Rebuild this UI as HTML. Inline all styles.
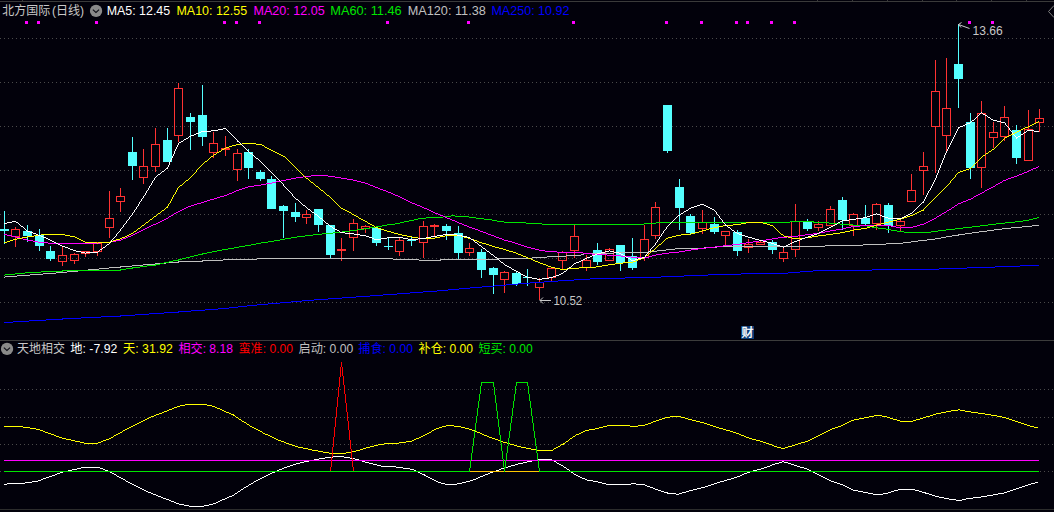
<!DOCTYPE html><html><head><meta charset="utf-8"><title>chart</title><style>html,body{margin:0;padding:0;background:#02010b;overflow:hidden}svg{display:block}text{font-family:"Liberation Sans","Noto Sans CJK SC",sans-serif;font-size:12.4px}</style></head><body>
<svg width="1054" height="512" viewBox="0 0 1054 512">
<rect width="1054" height="512" fill="#02010b"/>
<g shape-rendering="crispEdges">
<rect x="0" y="1" width="1054" height="1" fill="#3a3a3a"/>
<rect x="22" y="0" width="1" height="1" fill="#3a3a3a"/>
<rect x="817" y="0" width="1" height="1" fill="#3a3a3a"/>
<rect x="852" y="0" width="1" height="1" fill="#3a3a3a"/>
<rect x="887" y="0" width="1" height="1" fill="#3a3a3a"/>
<rect x="922" y="0" width="1" height="1" fill="#3a3a3a"/>
<rect x="956" y="0" width="1" height="1" fill="#3a3a3a"/>
<rect x="991" y="0" width="1" height="1" fill="#3a3a3a"/>
<rect x="1026" y="0" width="1" height="1" fill="#3a3a3a"/>
<rect x="0" y="340" width="1054" height="1" fill="#3c3c3c"/>
<rect x="0" y="509" width="1054" height="1" fill="#2c2c2c"/>
<line x1="0" x2="1054" y1="38.5" y2="38.5" stroke="#4a4a4a" stroke-width="1" stroke-dasharray="1 3"/>
<line x1="0" x2="1054" y1="82.5" y2="82.5" stroke="#4a4a4a" stroke-width="1" stroke-dasharray="1 3"/>
<line x1="0" x2="1054" y1="126.5" y2="126.5" stroke="#4a4a4a" stroke-width="1" stroke-dasharray="1 3"/>
<line x1="0" x2="1054" y1="170.5" y2="170.5" stroke="#4a4a4a" stroke-width="1" stroke-dasharray="1 3"/>
<line x1="0" x2="1054" y1="214.5" y2="214.5" stroke="#4a4a4a" stroke-width="1" stroke-dasharray="1 3"/>
<line x1="0" x2="1054" y1="258.5" y2="258.5" stroke="#4a4a4a" stroke-width="1" stroke-dasharray="1 3"/>
<line x1="0" x2="1054" y1="302.5" y2="302.5" stroke="#4a4a4a" stroke-width="1" stroke-dasharray="1 3"/>
<line x1="0" x2="1054" y1="389.5" y2="389.5" stroke="#4a4a4a" stroke-width="1" stroke-dasharray="1 3"/>
<line x1="0" x2="1054" y1="417.5" y2="417.5" stroke="#4a4a4a" stroke-width="1" stroke-dasharray="1 3"/>
<line x1="0" x2="1054" y1="444.5" y2="444.5" stroke="#4a4a4a" stroke-width="1" stroke-dasharray="1 3"/>
<line x1="0" x2="1054" y1="471.5" y2="471.5" stroke="#4a4a4a" stroke-width="1" stroke-dasharray="1 3"/>
<rect x="25" y="21" width="3" height="3" fill="#ff00ff"/>
<rect x="37" y="21" width="3" height="3" fill="#ff00ff"/>
<rect x="95" y="21" width="3" height="3" fill="#ff00ff"/>
<rect x="223" y="21" width="3" height="3" fill="#ff00ff"/>
<rect x="235" y="21" width="3" height="3" fill="#ff00ff"/>
<rect x="258" y="21" width="3" height="3" fill="#ff00ff"/>
<rect x="386" y="21" width="3" height="3" fill="#ff00ff"/>
<rect x="467" y="21" width="3" height="3" fill="#ff00ff"/>
<rect x="572" y="21" width="3" height="3" fill="#ff00ff"/>
<rect x="665" y="21" width="3" height="3" fill="#ff00ff"/>
<rect x="700" y="21" width="3" height="3" fill="#ff00ff"/>
<rect x="735" y="21" width="3" height="3" fill="#ff00ff"/>
<rect x="746" y="21" width="3" height="3" fill="#ff00ff"/>
<rect x="770" y="21" width="3" height="3" fill="#ff00ff"/>
<rect x="793" y="21" width="3" height="3" fill="#ff00ff"/>
<rect x="968" y="21" width="3" height="3" fill="#ff00ff"/>
<rect x="991" y="21" width="3" height="3" fill="#ff00ff"/>
<rect x="4" y="211" width="1" height="33" fill="#54ffff"/>
<rect x="0" y="229" width="9" height="2" fill="#54ffff"/>
<rect x="15" y="227" width="1" height="2" fill="#ff3232"/>
<rect x="15" y="237" width="1" height="10" fill="#ff3232"/>
<rect x="11.5" y="229.5" width="8" height="7" fill="none" stroke="#ff3232" stroke-width="1"/>
<rect x="27" y="225" width="1" height="17" fill="#54ffff"/>
<rect x="23" y="231" width="9" height="5" fill="#54ffff"/>
<rect x="39" y="229" width="1" height="22" fill="#54ffff"/>
<rect x="35" y="235" width="9" height="11" fill="#54ffff"/>
<rect x="50" y="246" width="1" height="15" fill="#54ffff"/>
<rect x="46" y="251" width="9" height="8" fill="#54ffff"/>
<rect x="62" y="246" width="1" height="9" fill="#ff3232"/>
<rect x="62" y="262" width="1" height="4" fill="#ff3232"/>
<rect x="58.5" y="255.5" width="8" height="6" fill="none" stroke="#ff3232" stroke-width="1"/>
<rect x="74" y="253" width="1" height="1" fill="#ff3232"/>
<rect x="74" y="261" width="1" height="3" fill="#ff3232"/>
<rect x="70.5" y="254.5" width="8" height="6" fill="none" stroke="#ff3232" stroke-width="1"/>
<rect x="85" y="254" width="1" height="3" fill="#ff3232"/>
<rect x="81.5" y="251.5" width="8" height="2" fill="none" stroke="#ff3232" stroke-width="1"/>
<rect x="97" y="242" width="1" height="1" fill="#ff3232"/>
<rect x="97" y="252" width="1" height="4" fill="#ff3232"/>
<rect x="93.5" y="243.5" width="8" height="8" fill="none" stroke="#ff3232" stroke-width="1"/>
<rect x="109" y="191" width="1" height="27" fill="#ff3232"/>
<rect x="109" y="228" width="1" height="10" fill="#ff3232"/>
<rect x="105.5" y="218.5" width="8" height="9" fill="none" stroke="#ff3232" stroke-width="1"/>
<rect x="120" y="188" width="1" height="8" fill="#ff3232"/>
<rect x="120" y="202" width="1" height="10" fill="#ff3232"/>
<rect x="116.5" y="196.5" width="8" height="5" fill="none" stroke="#ff3232" stroke-width="1"/>
<rect x="132" y="137" width="1" height="43" fill="#54ffff"/>
<rect x="128" y="152" width="9" height="14" fill="#54ffff"/>
<rect x="143" y="149" width="1" height="17" fill="#ff3232"/>
<rect x="143" y="178" width="1" height="6" fill="#ff3232"/>
<rect x="139.5" y="166.5" width="8" height="11" fill="none" stroke="#ff3232" stroke-width="1"/>
<rect x="155" y="128" width="1" height="16" fill="#ff3232"/>
<rect x="155" y="167" width="1" height="5" fill="#ff3232"/>
<rect x="151.5" y="144.5" width="8" height="22" fill="none" stroke="#ff3232" stroke-width="1"/>
<rect x="167" y="128" width="1" height="34" fill="#54ffff"/>
<rect x="163" y="140" width="9" height="22" fill="#54ffff"/>
<rect x="178" y="83" width="1" height="5" fill="#ff3232"/>
<rect x="178" y="136" width="1" height="6" fill="#ff3232"/>
<rect x="174.5" y="88.5" width="8" height="47" fill="none" stroke="#ff3232" stroke-width="1"/>
<rect x="190" y="113" width="1" height="37" fill="#54ffff"/>
<rect x="186" y="117" width="9" height="5" fill="#54ffff"/>
<rect x="202" y="85" width="1" height="61" fill="#54ffff"/>
<rect x="198" y="115" width="9" height="22" fill="#54ffff"/>
<rect x="213" y="132" width="1" height="11" fill="#ff3232"/>
<rect x="213" y="153" width="1" height="5" fill="#ff3232"/>
<rect x="209.5" y="143.5" width="8" height="9" fill="none" stroke="#ff3232" stroke-width="1"/>
<rect x="225" y="136" width="1" height="12" fill="#ff3232"/>
<rect x="225" y="150" width="1" height="6" fill="#ff3232"/>
<rect x="221" y="148" width="9" height="2" fill="#ff3232"/>
<rect x="237" y="149" width="1" height="4" fill="#ff3232"/>
<rect x="237" y="170" width="1" height="11" fill="#ff3232"/>
<rect x="233.5" y="153.5" width="8" height="16" fill="none" stroke="#ff3232" stroke-width="1"/>
<rect x="248" y="149" width="1" height="30" fill="#54ffff"/>
<rect x="244" y="152" width="9" height="16" fill="#54ffff"/>
<rect x="260" y="170" width="1" height="11" fill="#54ffff"/>
<rect x="256" y="172" width="9" height="7" fill="#54ffff"/>
<rect x="271" y="176" width="1" height="33" fill="#54ffff"/>
<rect x="267" y="179" width="9" height="30" fill="#54ffff"/>
<rect x="283" y="205" width="1" height="33" fill="#54ffff"/>
<rect x="279" y="206" width="9" height="5" fill="#54ffff"/>
<rect x="295" y="203" width="1" height="19" fill="#54ffff"/>
<rect x="291" y="212" width="9" height="5" fill="#54ffff"/>
<rect x="306" y="210" width="1" height="4" fill="#ff3232"/>
<rect x="306" y="218" width="1" height="6" fill="#ff3232"/>
<rect x="302.5" y="214.5" width="8" height="3" fill="none" stroke="#ff3232" stroke-width="1"/>
<rect x="318" y="209" width="1" height="23" fill="#54ffff"/>
<rect x="314" y="209" width="9" height="16" fill="#54ffff"/>
<rect x="330" y="225" width="1" height="33" fill="#54ffff"/>
<rect x="326" y="225" width="9" height="30" fill="#54ffff"/>
<rect x="341" y="238" width="1" height="11" fill="#ff3232"/>
<rect x="341" y="251" width="1" height="10" fill="#ff3232"/>
<rect x="337" y="249" width="9" height="2" fill="#ff3232"/>
<rect x="353" y="219" width="1" height="4" fill="#ff3232"/>
<rect x="353" y="238" width="1" height="13" fill="#ff3232"/>
<rect x="349.5" y="223.5" width="8" height="14" fill="none" stroke="#ff3232" stroke-width="1"/>
<rect x="365" y="225" width="1" height="1" fill="#ff3232"/>
<rect x="365" y="229" width="1" height="4" fill="#ff3232"/>
<rect x="361.5" y="226.5" width="8" height="2" fill="none" stroke="#ff3232" stroke-width="1"/>
<rect x="376" y="226" width="1" height="20" fill="#54ffff"/>
<rect x="372" y="228" width="9" height="15" fill="#54ffff"/>
<rect x="388" y="238" width="1" height="12" fill="#54ffff"/>
<rect x="384" y="246" width="9" height="1" fill="#54ffff"/>
<rect x="399" y="238" width="1" height="2" fill="#ff3232"/>
<rect x="399" y="252" width="1" height="4" fill="#ff3232"/>
<rect x="395.5" y="240.5" width="8" height="11" fill="none" stroke="#ff3232" stroke-width="1"/>
<rect x="411" y="236" width="1" height="10" fill="#54ffff"/>
<rect x="407" y="240" width="9" height="1" fill="#54ffff"/>
<rect x="423" y="221" width="1" height="5" fill="#ff3232"/>
<rect x="423" y="243" width="1" height="15" fill="#ff3232"/>
<rect x="419.5" y="226.5" width="8" height="16" fill="none" stroke="#ff3232" stroke-width="1"/>
<rect x="434" y="224" width="1" height="1" fill="#ff3232"/>
<rect x="434" y="227" width="1" height="9" fill="#ff3232"/>
<rect x="430" y="225" width="9" height="2" fill="#ff3232"/>
<rect x="446" y="224" width="1" height="16" fill="#54ffff"/>
<rect x="442" y="226" width="9" height="5" fill="#54ffff"/>
<rect x="458" y="226" width="1" height="33" fill="#54ffff"/>
<rect x="454" y="233" width="9" height="20" fill="#54ffff"/>
<rect x="469" y="243" width="1" height="5" fill="#ff3232"/>
<rect x="469" y="253" width="1" height="3" fill="#ff3232"/>
<rect x="465.5" y="248.5" width="8" height="4" fill="none" stroke="#ff3232" stroke-width="1"/>
<rect x="481" y="249" width="1" height="29" fill="#54ffff"/>
<rect x="477" y="252" width="9" height="18" fill="#54ffff"/>
<rect x="493" y="267" width="1" height="27" fill="#54ffff"/>
<rect x="489" y="268" width="9" height="7" fill="#54ffff"/>
<rect x="504" y="271" width="1" height="1" fill="#ff3232"/>
<rect x="504" y="280" width="1" height="13" fill="#ff3232"/>
<rect x="500.5" y="272.5" width="8" height="7" fill="none" stroke="#ff3232" stroke-width="1"/>
<rect x="516" y="271" width="1" height="15" fill="#54ffff"/>
<rect x="512" y="273" width="9" height="11" fill="#54ffff"/>
<rect x="527" y="269" width="1" height="17" fill="#54ffff"/>
<rect x="523" y="277" width="9" height="1" fill="#54ffff"/>
<rect x="539" y="278" width="1" height="4" fill="#ff3232"/>
<rect x="539" y="288" width="1" height="12" fill="#ff3232"/>
<rect x="535.5" y="282.5" width="8" height="5" fill="none" stroke="#ff3232" stroke-width="1"/>
<rect x="551" y="278" width="1" height="4" fill="#ff3232"/>
<rect x="547.5" y="268.5" width="8" height="9" fill="none" stroke="#ff3232" stroke-width="1"/>
<rect x="562" y="251" width="1" height="1" fill="#ff3232"/>
<rect x="562" y="261" width="1" height="9" fill="#ff3232"/>
<rect x="558.5" y="252.5" width="8" height="8" fill="none" stroke="#ff3232" stroke-width="1"/>
<rect x="574" y="225" width="1" height="11" fill="#ff3232"/>
<rect x="574" y="251" width="1" height="7" fill="#ff3232"/>
<rect x="570.5" y="236.5" width="8" height="14" fill="none" stroke="#ff3232" stroke-width="1"/>
<rect x="586" y="255" width="1" height="5" fill="#ff3232"/>
<rect x="586" y="268" width="1" height="3" fill="#ff3232"/>
<rect x="582.5" y="260.5" width="8" height="7" fill="none" stroke="#ff3232" stroke-width="1"/>
<rect x="597" y="243" width="1" height="22" fill="#54ffff"/>
<rect x="593" y="250" width="9" height="12" fill="#54ffff"/>
<rect x="609" y="248" width="1" height="1" fill="#ff3232"/>
<rect x="605.5" y="249.5" width="8" height="11" fill="none" stroke="#ff3232" stroke-width="1"/>
<rect x="620" y="245" width="1" height="26" fill="#54ffff"/>
<rect x="616" y="245" width="9" height="18" fill="#54ffff"/>
<rect x="632" y="238" width="1" height="32" fill="#54ffff"/>
<rect x="628" y="256" width="9" height="12" fill="#54ffff"/>
<rect x="644" y="225" width="1" height="14" fill="#ff3232"/>
<rect x="644" y="258" width="1" height="3" fill="#ff3232"/>
<rect x="640.5" y="239.5" width="8" height="18" fill="none" stroke="#ff3232" stroke-width="1"/>
<rect x="655" y="202" width="1" height="5" fill="#ff3232"/>
<rect x="655" y="236" width="1" height="3" fill="#ff3232"/>
<rect x="651.5" y="207.5" width="8" height="28" fill="none" stroke="#ff3232" stroke-width="1"/>
<rect x="667" y="105" width="1" height="48" fill="#54ffff"/>
<rect x="663" y="105" width="9" height="46" fill="#54ffff"/>
<rect x="679" y="179" width="1" height="51" fill="#54ffff"/>
<rect x="675" y="187" width="9" height="21" fill="#54ffff"/>
<rect x="690" y="214" width="1" height="20" fill="#54ffff"/>
<rect x="686" y="216" width="9" height="17" fill="#54ffff"/>
<rect x="702" y="210" width="1" height="12" fill="#ff3232"/>
<rect x="702" y="229" width="1" height="5" fill="#ff3232"/>
<rect x="698.5" y="222.5" width="8" height="6" fill="none" stroke="#ff3232" stroke-width="1"/>
<rect x="714" y="217" width="1" height="17" fill="#54ffff"/>
<rect x="710" y="224" width="9" height="8" fill="#54ffff"/>
<rect x="725" y="236" width="1" height="10" fill="#ff3232"/>
<rect x="721.5" y="231.5" width="8" height="4" fill="none" stroke="#ff3232" stroke-width="1"/>
<rect x="737" y="230" width="1" height="26" fill="#54ffff"/>
<rect x="733" y="232" width="9" height="19" fill="#54ffff"/>
<rect x="748" y="239" width="1" height="5" fill="#ff3232"/>
<rect x="748" y="248" width="1" height="5" fill="#ff3232"/>
<rect x="744.5" y="244.5" width="8" height="3" fill="none" stroke="#ff3232" stroke-width="1"/>
<rect x="760" y="240" width="1" height="2" fill="#ff3232"/>
<rect x="756.5" y="242.5" width="8" height="2" fill="none" stroke="#ff3232" stroke-width="1"/>
<rect x="772" y="240" width="1" height="14" fill="#54ffff"/>
<rect x="768" y="242" width="9" height="8" fill="#54ffff"/>
<rect x="783" y="248" width="1" height="4" fill="#ff3232"/>
<rect x="783" y="259" width="1" height="3" fill="#ff3232"/>
<rect x="779.5" y="252.5" width="8" height="6" fill="none" stroke="#ff3232" stroke-width="1"/>
<rect x="795" y="204" width="1" height="17" fill="#ff3232"/>
<rect x="795" y="250" width="1" height="7" fill="#ff3232"/>
<rect x="791.5" y="221.5" width="8" height="28" fill="none" stroke="#ff3232" stroke-width="1"/>
<rect x="807" y="219" width="1" height="12" fill="#54ffff"/>
<rect x="803" y="221" width="9" height="8" fill="#54ffff"/>
<rect x="818" y="221" width="1" height="3" fill="#ff3232"/>
<rect x="818" y="228" width="1" height="3" fill="#ff3232"/>
<rect x="814.5" y="224.5" width="8" height="3" fill="none" stroke="#ff3232" stroke-width="1"/>
<rect x="830" y="206" width="1" height="3" fill="#ff3232"/>
<rect x="826.5" y="209.5" width="8" height="16" fill="none" stroke="#ff3232" stroke-width="1"/>
<rect x="842" y="197" width="1" height="33" fill="#54ffff"/>
<rect x="838" y="200" width="9" height="20" fill="#54ffff"/>
<rect x="853" y="213" width="1" height="1" fill="#ff3232"/>
<rect x="853" y="226" width="1" height="10" fill="#ff3232"/>
<rect x="849.5" y="214.5" width="8" height="11" fill="none" stroke="#ff3232" stroke-width="1"/>
<rect x="865" y="205" width="1" height="21" fill="#54ffff"/>
<rect x="861" y="218" width="9" height="6" fill="#54ffff"/>
<rect x="876" y="203" width="1" height="1" fill="#ff3232"/>
<rect x="876" y="224" width="1" height="6" fill="#ff3232"/>
<rect x="872.5" y="204.5" width="8" height="19" fill="none" stroke="#ff3232" stroke-width="1"/>
<rect x="888" y="203" width="1" height="30" fill="#54ffff"/>
<rect x="884" y="205" width="9" height="21" fill="#54ffff"/>
<rect x="900" y="219" width="1" height="2" fill="#ff3232"/>
<rect x="900" y="226" width="1" height="5" fill="#ff3232"/>
<rect x="896.5" y="221.5" width="8" height="4" fill="none" stroke="#ff3232" stroke-width="1"/>
<rect x="911" y="174" width="1" height="16" fill="#ff3232"/>
<rect x="907.5" y="190.5" width="8" height="11" fill="none" stroke="#ff3232" stroke-width="1"/>
<rect x="923" y="152" width="1" height="14" fill="#ff3232"/>
<rect x="923" y="171" width="1" height="24" fill="#ff3232"/>
<rect x="919.5" y="166.5" width="8" height="4" fill="none" stroke="#ff3232" stroke-width="1"/>
<rect x="935" y="60" width="1" height="31" fill="#ff3232"/>
<rect x="935" y="127" width="1" height="46" fill="#ff3232"/>
<rect x="931.5" y="91.5" width="8" height="35" fill="none" stroke="#ff3232" stroke-width="1"/>
<rect x="946" y="58" width="1" height="50" fill="#ff3232"/>
<rect x="946" y="136" width="1" height="15" fill="#ff3232"/>
<rect x="942.5" y="108.5" width="8" height="27" fill="none" stroke="#ff3232" stroke-width="1"/>
<rect x="958" y="24" width="1" height="84" fill="#54ffff"/>
<rect x="954" y="64" width="9" height="15" fill="#54ffff"/>
<rect x="970" y="113" width="1" height="66" fill="#54ffff"/>
<rect x="966" y="122" width="9" height="46" fill="#54ffff"/>
<rect x="981" y="101" width="1" height="12" fill="#ff3232"/>
<rect x="981" y="168" width="1" height="20" fill="#ff3232"/>
<rect x="977.5" y="113.5" width="8" height="54" fill="none" stroke="#ff3232" stroke-width="1"/>
<rect x="993" y="122" width="1" height="10" fill="#ff3232"/>
<rect x="993" y="138" width="1" height="10" fill="#ff3232"/>
<rect x="989.5" y="132.5" width="8" height="5" fill="none" stroke="#ff3232" stroke-width="1"/>
<rect x="1004" y="106" width="1" height="11" fill="#ff3232"/>
<rect x="1004" y="137" width="1" height="4" fill="#ff3232"/>
<rect x="1000.5" y="117.5" width="8" height="19" fill="none" stroke="#ff3232" stroke-width="1"/>
<rect x="1016" y="125" width="1" height="39" fill="#54ffff"/>
<rect x="1012" y="130" width="9" height="28" fill="#54ffff"/>
<rect x="1028" y="110" width="1" height="19" fill="#ff3232"/>
<rect x="1024.5" y="129.5" width="8" height="31" fill="none" stroke="#ff3232" stroke-width="1"/>
<rect x="1039" y="109" width="1" height="9" fill="#ff3232"/>
<rect x="1039" y="123" width="1" height="9" fill="#ff3232"/>
<rect x="1035.5" y="118.5" width="8" height="4" fill="none" stroke="#ff3232" stroke-width="1"/>
<path fill="none" stroke="#0000ff" stroke-width="1" d="M4 322.5h9M13 321.5h16M29 320.5h17M46 319.5h17M62 318.5h19M81 317.5h20M101 316.5h20M120 315.5h15M135 314.5h14M149 313.5h15M164 312.5h15M178 311.5h13M191 310.5h14M205 309.5h13M218 308.5h8M225 308.5h4M229 307.5h9M238 306.5h9M247 305.5h4M250 305.5h7M257 304.5h11M268 303.5h12M280 302.5h11M291 301.5h11M302 300.5h11M312 300.5h2M314 299.5h14M328 298.5h14M342 297.5h14M356 296.5h14M370 295.5h6M375 295.5h8M383 294.5h14M397 293.5h13M410 292.5h13M423 291.5h14M437 290.5h1M437 290.5h11M448 289.5h11M459 288.5h11M470 287.5h6M475 287.5h7M482 286.5h12M494 285.5h7M500 285.5h6M506 284.5h12M518 283.5h10M527 283.5h3M530 282.5h14M544 281.5h14M558 280.5h5M562 280.5h12M574 279.5h16M590 278.5h11M600 278.5h25M625 277.5h20M644 277.5h17M661 276.5h15M675 276.5h9M684 275.5h19M702 275.5h6M708 274.5h18M725 274.5h16M741 273.5h24M764 273.5h24M787 273.5h1M788 272.5h12M800 271.5h13M812 271.5h1M813 270.5h38M850 270.5h22M872 269.5h54M925 269.5h14M939 268.5h28M967 267.5h9M975 267.5h20M995 266.5h20M1014 266.5h6M1020 265.5h19"/>
<path fill="none" stroke="#c0c0c0" stroke-width="1" d="M4 277.5h1M5 276.5h12M17 275.5h13M30 274.5h13M43 273.5h13M56 272.5h7M62 272.5h5M67 271.5h11M78 270.5h10M88 269.5h11M99 268.5h10M109 267.5h12M120 266.5h12M132 265.5h11M143 264.5h12M155 263.5h11M166 262.5h13M178 261.5h25M202 260.5h21M223 259.5h15M237 259.5h20M257 258.5h8M264 258.5h129M392 258.5h1M393 259.5h6M398 259.5h21M418 259.5h1M419 260.5h1M419 260.5h22M440 259.5h2M441 259.5h55M495 259.5h3M498 258.5h3M500 258.5h32M531 258.5h1M532 257.5h15M547 256.5h11M557 256.5h9M566 255.5h15M580 255.5h1M581 254.5h3M584 253.5h2M585 253.5h29M614 252.5h19M632 252.5h13M644 252.5h4M648 251.5h9M657 250.5h9M666 249.5h9M675 248.5h1M675 248.5h28M702 248.5h2M704 247.5h13M717 246.5h9M725 246.5h40M764 246.5h20M783 246.5h40M822 246.5h3M825 245.5h6M830 245.5h28M857 245.5h6M863 244.5h3M865 244.5h16M880 244.5h6M886 243.5h3M888 243.5h13M900 243.5h3M903 242.5h8M911 241.5h7M918 240.5h6M923 240.5h4M927 239.5h6M932 239.5h3M935 238.5h6M941 237.5h5M946 236.5h6M952 235.5h7M958 234.5h7M965 233.5h7M972 232.5h7M979 231.5h3M981 231.5h6M987 230.5h7M994 229.5h8M1002 228.5h3M1004 228.5h7M1011 227.5h11M1022 226.5h7M1028 226.5h4M1032 225.5h7"/>
<path fill="none" stroke="#00e600" stroke-width="1" d="M4 275.5h1M5 274.5h10M15 273.5h10M25 272.5h6M30 272.5h11M41 271.5h22M62 270.5h36M97 270.5h24M120 269.5h6M126 268.5h7M132 267.5h8M140 266.5h7M147 265.5h9M155 264.5h5M160 263.5h4M164 262.5h5M169 261.5h4M173 260.5h6M178 259.5h4M182 258.5h4M186 257.5h4M190 256.5h4M194 255.5h4M198 254.5h5M202 253.5h5M207 252.5h5M212 251.5h5M217 250.5h5M222 249.5h4M225 249.5h3M228 248.5h6M234 247.5h5M239 246.5h6M245 245.5h4M248 245.5h3M251 244.5h5M256 243.5h5M261 242.5h4M264 242.5h4M268 241.5h4M271 241.5h3M274 240.5h6M280 239.5h5M285 238.5h6M291 237.5h5M295 237.5h2M297 236.5h8M305 235.5h8M313 234.5h6M318 234.5h4M322 233.5h11M333 232.5h9M341 232.5h1M342 231.5h8M350 230.5h7M357 229.5h7M364 228.5h2M365 228.5h5M370 227.5h6M376 226.5h6M382 225.5h5M387 224.5h2M388 224.5h5M392 224.5h3M395 223.5h5M400 222.5h4M404 221.5h1M404 221.5h5M409 220.5h5M414 219.5h4M418 218.5h5M422 218.5h4M426 217.5h15M440 217.5h3M443 216.5h8M451 215.5h2M452 215.5h3M455 216.5h9M463 216.5h6M469 217.5h6M474 217.5h2M476 218.5h8M484 219.5h8M492 220.5h1M492 220.5h5M497 221.5h6M502 221.5h2M504 222.5h19M522 222.5h4M526 223.5h16M542 224.5h5M546 224.5h55M600 224.5h41M640 224.5h4M644 223.5h12M656 222.5h7M662 222.5h111M772 222.5h18M789 222.5h1M790 221.5h1M790 221.5h24M813 222.5h2M814 222.5h11M824 222.5h5M829 223.5h3M831 223.5h9M840 224.5h3M842 224.5h11M853 225.5h1M853 225.5h14M866 225.5h1M867 226.5h5M872 227.5h5M876 227.5h2M878 228.5h8M885 228.5h1M886 229.5h5M891 230.5h5M895 230.5h2M897 231.5h7M904 232.5h2M905 232.5h24M928 232.5h3M931 231.5h7M938 230.5h8M946 229.5h1M946 229.5h9M955 228.5h8M963 227.5h8M970 227.5h2M972 226.5h8M980 225.5h8M988 224.5h6M993 224.5h3M996 223.5h9M1005 222.5h10M1015 221.5h2M1016 221.5h7M1023 220.5h6M1028 220.5h1M1029 219.5h4M1033 218.5h4M1037 217.5h2"/>
<path fill="none" stroke="#ff00ff" stroke-width="1" d="M4 234.5h3M7 235.5h5M12 236.5h4M15 236.5h1M16 237.5h4M20 238.5h3M23 239.5h4M27 240.5h1M27 240.5h6M33 241.5h5M38 242.5h2M39 242.5h9M48 243.5h3M50 243.5h13M62 243.5h13M74 243.5h12M85 243.5h13M97 243.5h3M100 242.5h10M109 242.5h2M111 241.5h5M116 240.5h5M120 240.5h1M121 239.5h2M123 238.5h3M126 237.5h2M128 236.5h3M131 235.5h2M132 235.5h1M133 234.5h2M135 233.5h2M137 232.5h2M139 231.5h2M141 230.5h2M143 229.5h1M143 229.5h2M145 228.5h2M147 227.5h2M149 226.5h2M151 225.5h2M153 224.5h3M155 224.5h1M156 223.5h2M158 222.5h2M160 221.5h2M162 220.5h2M164 219.5h2M166 218.5h2M167 218.5h1M168 217.5h1M169 216.5h2M171 215.5h2M173 214.5h1M174 213.5h2M176 212.5h2M178 211.5h1M178 211.5h2M180 210.5h2M182 209.5h2M184 208.5h2M186 207.5h2M188 206.5h3M190 206.5h1M191 205.5h3M194 204.5h3M197 203.5h4M201 202.5h2M202 202.5h2M204 201.5h3M207 200.5h3M210 199.5h4M213 199.5h1M214 198.5h3M217 197.5h3M220 196.5h4M224 195.5h2M225 195.5h2M227 194.5h2M229 193.5h3M232 192.5h2M234 191.5h2M236 190.5h2M237 190.5h2M239 189.5h3M242 188.5h3M245 187.5h3M248 186.5h1M248 186.5h6M254 185.5h7M260 185.5h1M261 184.5h5M266 183.5h6M271 183.5h1M272 182.5h4M276 181.5h5M281 180.5h3M283 180.5h3M286 179.5h5M291 178.5h5M295 178.5h1M296 177.5h7M303 176.5h4M306 176.5h5M311 175.5h8M318 175.5h10M328 176.5h3M330 176.5h5M335 177.5h6M341 178.5h1M341 178.5h6M347 179.5h6M353 180.5h1M353 180.5h4M357 181.5h4M361 182.5h4M365 183.5h1M365 183.5h3M368 184.5h2M370 185.5h3M373 186.5h2M375 187.5h2M376 187.5h2M378 188.5h2M380 189.5h3M383 190.5h3M386 191.5h2M388 192.5h1M388 192.5h3M391 193.5h2M393 194.5h2M395 195.5h3M398 196.5h2M399 196.5h1M400 197.5h2M402 198.5h2M404 199.5h2M406 200.5h2M408 201.5h2M410 202.5h2M411 202.5h1M412 203.5h3M415 204.5h2M417 205.5h3M420 206.5h2M422 207.5h2M423 207.5h1M424 208.5h3M427 209.5h2M429 210.5h2M431 211.5h2M433 212.5h2M434 212.5h1M435 213.5h3M438 214.5h2M440 215.5h3M443 216.5h2M445 217.5h2M446 217.5h1M447 218.5h3M450 219.5h2M452 220.5h3M455 221.5h2M457 222.5h2M458 222.5h1M459 223.5h3M462 224.5h2M464 225.5h3M467 226.5h2M469 227.5h1M469 227.5h3M472 228.5h3M475 229.5h3M478 230.5h2M480 231.5h2M481 231.5h2M483 232.5h3M486 233.5h2M488 234.5h3M491 235.5h3M493 235.5h1M494 236.5h2M496 237.5h3M499 238.5h3M502 239.5h2M504 240.5h1M504 240.5h4M508 241.5h4M512 242.5h3M515 243.5h2M516 243.5h2M518 244.5h3M521 245.5h3M524 246.5h3M527 247.5h1M527 247.5h4M531 248.5h4M535 249.5h4M539 250.5h1M539 250.5h6M545 251.5h7M551 251.5h6M557 252.5h6M562 252.5h13M574 252.5h9M583 253.5h4M586 253.5h6M592 254.5h6M597 254.5h10M607 255.5h3M609 255.5h12M620 255.5h1M621 256.5h10M631 257.5h2M632 257.5h10M642 258.5h3M644 258.5h1M645 257.5h4M649 256.5h3M652 255.5h4M655 255.5h1M656 254.5h6M662 253.5h6M667 253.5h2M669 252.5h10M679 251.5h1M679 251.5h6M685 250.5h6M690 250.5h1M691 249.5h7M698 248.5h5M702 248.5h4M706 247.5h9M714 247.5h1M715 246.5h8M723 245.5h3M725 245.5h7M732 244.5h6M737 244.5h3M740 243.5h6M746 242.5h3M748 242.5h5M753 241.5h6M759 240.5h2M760 240.5h6M766 239.5h6M772 238.5h1M772 238.5h6M778 237.5h6M783 237.5h4M787 236.5h9M795 236.5h3M798 235.5h7M805 234.5h3M807 234.5h6M813 233.5h6M818 233.5h2M820 232.5h5M825 231.5h5M830 230.5h1M830 230.5h6M836 229.5h6M842 228.5h1M842 228.5h4M846 227.5h5M851 226.5h3M853 226.5h7M860 225.5h6M865 225.5h12M876 225.5h13M888 225.5h3M891 226.5h5M896 227.5h4M900 228.5h1M900 228.5h1M901 227.5h11M911 227.5h2M913 226.5h4M917 225.5h3M920 224.5h4M923 224.5h1M924 223.5h2M926 222.5h2M928 221.5h2M930 220.5h2M932 219.5h2M934 218.5h2M935 218.5h1M936 217.5h1M937 216.5h2M939 215.5h2M941 214.5h1M942 213.5h2M944 212.5h2M946 211.5h1M946 211.5h1M947 210.5h2M949 209.5h2M951 208.5h1M952 207.5h2M954 206.5h1M955 205.5h2M957 204.5h1M958 203.5h1M958 203.5h3M961 202.5h2M963 201.5h3M966 200.5h2M968 199.5h3M970 199.5h1M971 198.5h2M973 197.5h1M974 196.5h2M976 195.5h2M978 194.5h2M980 193.5h2M981 193.5h1M982 192.5h2M984 191.5h1M985 190.5h2M987 189.5h2M989 188.5h2M991 187.5h2M993 186.5h1M993 186.5h2M995 185.5h1M996 184.5h2M998 183.5h2M1000 182.5h2M1002 181.5h1M1003 180.5h2M1004 180.5h2M1006 179.5h2M1008 178.5h3M1011 177.5h3M1014 176.5h3M1016 176.5h1M1017 175.5h2M1019 174.5h3M1022 173.5h2M1024 172.5h3M1027 171.5h2M1028 171.5h1M1029 170.5h2M1031 169.5h2M1033 168.5h3M1036 167.5h2M1038 166.5h1"/>
<path fill="none" stroke="#ffff00" stroke-width="1" d="M4 242.5h3M7 241.5h3M10 240.5h3M13 239.5h3M15 239.5h2M17 238.5h5M22 237.5h5M27 236.5h1M27 236.5h7M34 235.5h6M39 235.5h2M41 234.5h10M50 234.5h13M62 234.5h3M65 235.5h5M70 236.5h5M74 236.5h1M75 237.5h2M77 238.5h2M79 239.5h2M81 240.5h2M83 241.5h2M85 242.5h1M85 242.5h12M97 243.5h1M97 243.5h1M98 242.5h12M109 242.5h1M110 241.5h3M113 240.5h3M116 239.5h4M120 238.5h1M120 238.5h2M122 237.5h3M125 236.5h2M127 235.5h2M129 234.5h2M131 233.5h2M132 233.5h1M133 232.5h1M134 231.5h2M136 230.5h1M137 229.5h1M138 228.5h2M140 227.5h1M141 226.5h1M142 225.5h2M143 225.5h1M144 224.5h1M145 223.5h1M146 222.5h2M148 221.5h1M149 220.5h1M150 219.5h2M152 218.5h1M153 217.5h1M154 216.5h2M155 216.5h1M156 215.5h1M157 214.5h1M158 213.5h2M160 212.5h1M161 211.5h1M162 210.5h2M164 209.5h1M165 208.5h1M166 207.5h2M178.5 187v1M177.5 188v2M176.5 190v2M175.5 192v2M174.5 194v1M173.5 195v2M172.5 197v2M171.5 199v2M170.5 201v2M169.5 203v1M168.5 204v2M167.5 206v2M178 187.5h1M179 186.5h1M180 185.5h2M182 184.5h1M183 183.5h1M184 182.5h1M185 181.5h1M186 180.5h2M188 179.5h1M189 178.5h1M190 177.5h1M202.5 164v1M201.5 165v1M200.5 166v1M199.5 167v1M198.5 168v1M197.5 169v1M196.5 170v2M195.5 172v1M194.5 173v1M193.5 174v1M192.5 175v1M191.5 176v1M190.5 177v1M202 164.5h1M203 163.5h1M204 162.5h1M205 161.5h2M207 160.5h1M208 159.5h1M209 158.5h1M210 157.5h1M211 156.5h2M213 155.5h1M213 155.5h1M214 154.5h2M216 153.5h1M217 152.5h2M219 151.5h2M221 150.5h1M222 149.5h2M224 148.5h2M225 148.5h1M226 147.5h3M229 146.5h3M232 145.5h4M236 144.5h2M237 144.5h5M242 143.5h7M248 143.5h8M256 144.5h5M260 144.5h2M262 145.5h2M264 146.5h1M265 147.5h2M267 148.5h2M269 149.5h2M271 150.5h1M271 150.5h2M273 151.5h2M275 152.5h2M277 153.5h2M279 154.5h2M281 155.5h2M283 156.5h1M283 156.5h2M285 157.5h1M286 158.5h1M287 159.5h1M288 160.5h1M289 161.5h1M290 162.5h1M291 163.5h1M292 164.5h1M293 165.5h1M294 166.5h1M295 167.5h1M295 167.5h1M296 168.5h1M297 169.5h1M298 170.5h1M299 171.5h1M300 172.5h1M301 173.5h1M302 174.5h1M303 175.5h1M304 176.5h1M305 177.5h1M306 178.5h1M306 178.5h2M308 179.5h1M309 180.5h1M310 181.5h1M311 182.5h2M313 183.5h1M314 184.5h1M315 185.5h1M316 186.5h2M318 187.5h1M318 187.5h1M319 188.5h1M320 189.5h1M321 190.5h2M323 191.5h1M324 192.5h1M325 193.5h1M326 194.5h1M327 195.5h2M329 196.5h1M330 197.5h1M330 197.5h1M331 198.5h1M332 199.5h1M333 200.5h1M334 201.5h1M335 202.5h1M336 203.5h1M337 204.5h1M338 205.5h1M339 206.5h1M340 207.5h1M341 208.5h1M341 208.5h2M343 209.5h2M345 210.5h2M347 211.5h2M349 212.5h2M351 213.5h1M352 214.5h2M353 214.5h1M354 215.5h2M356 216.5h2M358 217.5h1M359 218.5h2M361 219.5h2M363 220.5h2M365 221.5h1M365 221.5h2M367 222.5h1M368 223.5h2M370 224.5h2M372 225.5h2M374 226.5h1M375 227.5h2M376 227.5h2M378 228.5h3M381 229.5h3M384 230.5h3M387 231.5h2M388 231.5h3M391 232.5h3M394 233.5h4M398 234.5h2M399 234.5h3M402 235.5h5M407 236.5h5M411 236.5h1M412 237.5h6M418 238.5h6M423 238.5h12M434 238.5h1M435 237.5h5M440 236.5h5M445 235.5h2M446 235.5h13M458 235.5h3M461 236.5h3M464 237.5h4M468 238.5h2M469 238.5h2M471 239.5h3M474 240.5h3M477 241.5h2M479 242.5h3M481 242.5h1M482 243.5h4M486 244.5h3M489 245.5h3M492 246.5h2M493 246.5h2M495 247.5h4M499 248.5h4M503 249.5h2M504 249.5h2M506 250.5h3M509 251.5h4M513 252.5h3M516 253.5h1M516 253.5h2M518 254.5h3M521 255.5h2M523 256.5h3M526 257.5h2M527 257.5h1M528 258.5h3M531 259.5h2M533 260.5h2M535 261.5h3M538 262.5h2M539 262.5h1M540 263.5h3M543 264.5h3M546 265.5h2M548 266.5h3M551 267.5h1M551 267.5h4M555 268.5h5M560 269.5h3M562 269.5h5M567 268.5h8M574 268.5h5M579 267.5h8M586 267.5h10M596 266.5h2M597 266.5h5M602 265.5h6M608 264.5h2M609 264.5h6M615 263.5h6M620 263.5h3M623 262.5h10M632 262.5h1M633 261.5h3M636 260.5h2M638 259.5h3M641 258.5h3M644 257.5h1M644 257.5h1M645 256.5h1M646 255.5h2M648 254.5h1M649 253.5h1M650 252.5h1M651 251.5h1M652 250.5h2M654 249.5h1M655 248.5h1M655 248.5h1M656 247.5h1M657 246.5h1M658 245.5h1M659 244.5h2M661 243.5h1M662 242.5h1M663 241.5h1M664 240.5h1M665 239.5h1M666 238.5h2M667 238.5h1M668 237.5h4M672 236.5h4M676 235.5h4M679 235.5h2M681 234.5h10M690 234.5h1M691 233.5h4M695 232.5h4M699 231.5h3M702 230.5h1M702 230.5h4M706 229.5h3M709 228.5h4M713 227.5h2M714 227.5h4M718 226.5h5M723 225.5h3M725 225.5h8M733 224.5h5M737 224.5h4M741 223.5h5M746 222.5h3M748 222.5h13M760 222.5h3M763 223.5h4M767 224.5h3M770 225.5h3M772 225.5h1M773 226.5h1M774 227.5h1M775 228.5h1M776 229.5h1M777 230.5h1M778 231.5h1M779 232.5h1M780 233.5h1M781 234.5h2M783 235.5h1M783 235.5h1M784 236.5h4M788 237.5h4M792 238.5h4M795 238.5h10M805 237.5h3M807 237.5h5M812 236.5h6M818 235.5h1M818 235.5h8M826 234.5h5M830 234.5h3M833 233.5h7M840 232.5h3M842 232.5h3M845 231.5h5M850 230.5h4M853 230.5h1M854 229.5h7M861 228.5h5M865 228.5h2M867 227.5h3M870 226.5h4M874 225.5h3M876 225.5h1M877 224.5h4M881 223.5h4M885 222.5h4M888 222.5h1M889 221.5h4M893 220.5h4M897 219.5h4M900 219.5h1M901 218.5h3M904 217.5h3M907 216.5h3M910 215.5h2M911 215.5h2M913 214.5h2M915 213.5h2M917 212.5h2M919 211.5h2M921 210.5h3M935.5 197v1M934.5 198v1M933.5 199v1M932.5 200v1M931.5 201v1M930.5 202v1M929.5 203v1M928.5 204v1M927.5 205v1M926.5 206v1M925.5 207v1M924.5 208v1M923.5 209v2M935 197.5h1M936 196.5h1M937 195.5h1M938 194.5h1M939 193.5h1M940 192.5h1M941 191.5h1M942 190.5h1M943 189.5h1M944 188.5h1M945 187.5h1M946 186.5h1M958.5 172v1M957.5 173v1M956.5 174v1M955.5 175v2M954.5 177v1M953.5 178v1M952.5 179v1M951.5 180v1M950.5 181v2M949.5 183v1M948.5 184v1M947.5 185v1M946.5 186v1M958 172.5h2M960 171.5h3M963 170.5h3M966 169.5h3M969 168.5h2M981.5 157v1M980.5 158v1M979.5 159v1M978.5 160v1M977.5 161v1M976.5 162v1M975.5 163v1M974.5 164v1M973.5 165v1M972.5 166v1M971.5 167v1M970.5 168v1M981 157.5h1M982 156.5h1M983 155.5h2M985 154.5h1M986 153.5h2M988 152.5h1M989 151.5h2M991 150.5h1M992 149.5h2M1004.5 138v1M1003.5 139v1M1002.5 140v1M1001.5 141v1M1000.5 142v1M999.5 143v1M998.5 144v1M997.5 145v1M996.5 146v1M995.5 147v1M994.5 148v1M993.5 149v1M1004 138.5h1M1005 137.5h2M1007 136.5h2M1009 135.5h2M1011 134.5h2M1013 133.5h2M1015 132.5h2M1016 132.5h1M1017 131.5h2M1019 130.5h2M1021 129.5h2M1023 128.5h2M1025 127.5h3M1028 126.5h1M1028 126.5h2M1030 125.5h2M1032 124.5h2M1034 123.5h2M1036 122.5h2M1038 121.5h1"/>
<path fill="none" stroke="#ffffff" stroke-width="1" d="M4 223.5h3M7 222.5h5M12 221.5h4M15 221.5h1M16 222.5h2M18 223.5h1M19 224.5h1M20 225.5h1M21 226.5h2M23 227.5h1M24 228.5h1M25 229.5h1M26 230.5h1M27 231.5h1M27 231.5h3M30 232.5h3M33 233.5h3M36 234.5h2M38 235.5h2M39 235.5h2M41 236.5h2M43 237.5h3M46 238.5h2M48 239.5h2M50 240.5h1M50 240.5h2M52 241.5h2M54 242.5h2M56 243.5h2M58 244.5h2M60 245.5h2M62 246.5h1M62 246.5h3M65 247.5h3M68 248.5h2M70 249.5h3M73 250.5h2M74 250.5h2M76 251.5h5M81 252.5h4M85 253.5h1M85 253.5h1M86 252.5h12M97 252.5h1M98 251.5h1M99 250.5h1M100 249.5h2M102 248.5h1M103 247.5h2M105 246.5h1M106 245.5h1M107 244.5h2M109 243.5h1M120.5 230v1M119.5 231v1M118.5 232v1M117.5 233v1M116.5 234v2M115.5 236v1M114.5 237v1M113.5 238v1M112.5 239v1M111.5 240v2M110.5 242v1M109.5 243v1M132.5 214v1M131.5 215v1M130.5 216v1M129.5 217v2M128.5 219v1M127.5 220v1M126.5 221v2M125.5 223v1M124.5 224v1M123.5 225v2M122.5 227v1M121.5 228v1M120.5 229v2M143.5 197v1M142.5 198v1M141.5 199v2M140.5 201v1M139.5 202v2M138.5 204v2M137.5 206v1M136.5 207v2M135.5 209v1M134.5 210v2M133.5 212v1M132.5 213v2M155.5 177v1M154.5 178v2M153.5 180v1M152.5 181v2M151.5 183v2M150.5 185v1M149.5 186v2M148.5 188v2M147.5 190v1M146.5 191v2M145.5 193v2M144.5 195v1M143.5 196v2M155 177.5h1M156 176.5h1M157 175.5h1M158 174.5h2M160 173.5h1M161 172.5h1M162 171.5h2M164 170.5h1M165 169.5h1M166 168.5h2M178.5 143v2M177.5 145v2M176.5 147v2M175.5 149v2M174.5 151v3M173.5 154v2M172.5 156v2M171.5 158v2M170.5 160v2M169.5 162v3M168.5 165v2M167.5 167v2M178 143.5h1M179 142.5h2M181 141.5h2M183 140.5h1M184 139.5h2M186 138.5h2M188 137.5h1M189 136.5h2M190 136.5h1M191 135.5h3M194 134.5h2M196 133.5h3M199 132.5h2M201 131.5h2M202 131.5h9M211 130.5h3M213 130.5h5M218 129.5h5M223 128.5h3M225.5 128v1M226.5 129v1M227.5 130v1M228.5 131v1M229.5 132v1M230.5 133v1M231.5 134v1M232.5 135v1M233.5 136v1M234.5 137v1M235.5 138v1M236.5 139v1M237.5 140v2M237 141.5h2M239 142.5h1M240 143.5h1M241 144.5h1M242 145.5h1M243 146.5h1M244 147.5h1M245 148.5h1M246 149.5h1M247 150.5h1M248 151.5h1M248 151.5h1M249 152.5h1M250 153.5h2M252 154.5h1M253 155.5h1M254 156.5h1M255 157.5h1M256 158.5h2M258 159.5h1M259 160.5h1M260 161.5h1M260 161.5h1M261 162.5h1M262 163.5h1M263 164.5h1M264 165.5h1M265 166.5h1M266 167.5h1M267 168.5h1M268 169.5h1M269 170.5h1M270 171.5h1M271 172.5h1M271.5 172v1M272.5 173v1M273.5 174v1M274.5 175v1M275.5 176v1M276.5 177v1M277.5 178v1M278.5 179v1M279.5 180v1M280.5 181v1M281.5 182v1M282.5 183v1M283.5 184v2M283.5 185v1M284.5 186v1M285.5 187v1M286.5 188v1M287.5 189v1M288.5 190v1M289.5 191v1M290.5 192v1M291.5 193v1M292.5 194v2M293.5 196v1M294.5 197v1M295.5 198v1M295 198.5h1M296 199.5h2M298 200.5h1M299 201.5h1M300 202.5h1M301 203.5h1M302 204.5h1M303 205.5h2M305 206.5h1M306 207.5h1M306 207.5h1M307 208.5h1M308 209.5h2M310 210.5h1M311 211.5h1M312 212.5h2M314 213.5h1M315 214.5h2M317 215.5h1M318 216.5h1M318 216.5h1M319 217.5h1M320 218.5h2M322 219.5h1M323 220.5h1M324 221.5h1M325 222.5h1M326 223.5h2M328 224.5h1M329 225.5h1M330 226.5h1M330 226.5h2M332 227.5h1M333 228.5h2M335 229.5h2M337 230.5h2M339 231.5h1M340 232.5h2M341 232.5h4M345 233.5h9M353 233.5h1M354 234.5h6M360 235.5h6M365 235.5h1M366 236.5h3M369 237.5h3M372 238.5h2M374 239.5h3M376 239.5h5M381 238.5h6M387 237.5h2M388 237.5h12M399 237.5h4M403 238.5h5M408 239.5h4M411 239.5h7M418 238.5h6M423 238.5h3M426 237.5h5M431 236.5h4M434 236.5h3M437 235.5h6M443 234.5h4M446 234.5h11M457 235.5h2M458 235.5h4M462 236.5h5M467 237.5h3M469 237.5h1M470 238.5h1M471 239.5h2M473 240.5h1M474 241.5h1M475 242.5h2M477 243.5h1M478 244.5h1M479 245.5h2M481 246.5h1M481 246.5h1M482 247.5h1M483 248.5h2M485 249.5h1M486 250.5h1M487 251.5h2M489 252.5h1M490 253.5h1M491 254.5h2M493 255.5h1M493 255.5h1M494 256.5h1M495 257.5h2M497 258.5h1M498 259.5h1M499 260.5h1M500 261.5h1M501 262.5h2M503 263.5h1M504 264.5h1M504 264.5h1M505 265.5h2M507 266.5h2M509 267.5h2M511 268.5h1M512 269.5h2M514 270.5h2M516 271.5h1M516 271.5h2M518 272.5h2M520 273.5h1M521 274.5h2M523 275.5h2M525 276.5h2M527 277.5h1M527 277.5h5M532 278.5h5M537 279.5h3M539 279.5h3M542 278.5h7M549 277.5h3M551 277.5h2M553 276.5h3M556 275.5h3M559 274.5h2M561 273.5h2M562 273.5h1M563 272.5h1M564 271.5h2M566 270.5h1M567 269.5h1M568 268.5h1M569 267.5h2M571 266.5h1M572 265.5h1M573 264.5h1M574 263.5h1M574 263.5h2M576 262.5h3M579 261.5h2M581 260.5h2M583 259.5h2M585 258.5h2M586 258.5h1M587 257.5h3M590 256.5h2M592 255.5h3M595 254.5h2M597 253.5h1M597 253.5h4M601 252.5h4M605 251.5h4M609 250.5h1M609 250.5h1M610 251.5h4M614 252.5h5M619 253.5h2M620 253.5h1M621 254.5h2M623 255.5h2M625 256.5h1M626 257.5h2M628 258.5h2M630 259.5h1M631 260.5h2M632 260.5h3M635 259.5h3M638 258.5h4M642 257.5h3M655.5 244v1M654.5 245v1M653.5 246v1M652.5 247v1M651.5 248v1M650.5 249v2M649.5 251v1M648.5 252v1M647.5 253v1M646.5 254v1M645.5 255v2M644.5 257v1M667.5 226v1M666.5 227v2M665.5 229v1M664.5 230v1M663.5 231v2M662.5 233v1M661.5 234v2M660.5 236v1M659.5 237v2M658.5 239v1M657.5 240v2M656.5 242v1M655.5 243v2M667 226.5h1M668 225.5h1M669 224.5h1M670 223.5h1M671 222.5h1M672 221.5h1M673 220.5h1M674 219.5h1M675 218.5h1M676 217.5h1M677 216.5h1M678 215.5h2M679 215.5h1M680 214.5h1M681 213.5h2M683 212.5h1M684 211.5h2M686 210.5h2M688 209.5h1M689 208.5h2M690 208.5h1M691 207.5h3M694 206.5h3M697 205.5h3M700 204.5h3M702 204.5h2M704 205.5h2M706 206.5h2M708 207.5h2M710 208.5h2M712 209.5h2M714 210.5h1M714.5 210v1M715.5 211v1M716.5 212v2M717.5 214v1M718.5 215v1M719.5 216v2M720.5 218v1M721.5 219v1M722.5 220v2M723.5 222v1M724.5 223v1M725.5 224v2M725 225.5h2M727 226.5h1M728 227.5h2M730 228.5h1M731 229.5h1M732 230.5h2M734 231.5h1M735 232.5h2M737 233.5h1M737 233.5h2M739 234.5h3M742 235.5h3M745 236.5h3M748 237.5h1M748 237.5h4M752 238.5h3M755 239.5h4M759 240.5h2M760 240.5h3M763 241.5h4M767 242.5h4M771 243.5h2M772 243.5h2M774 244.5h3M777 245.5h3M780 246.5h3M783 247.5h1M783 247.5h1M784 246.5h2M786 245.5h2M788 244.5h2M790 243.5h2M792 242.5h2M794 241.5h2M795 241.5h2M797 240.5h3M800 239.5h2M802 238.5h3M805 237.5h3M807 237.5h1M808 236.5h3M811 235.5h3M814 234.5h3M817 233.5h2M818 233.5h1M819 232.5h2M821 231.5h2M823 230.5h2M825 229.5h2M827 228.5h2M829 227.5h2M830 227.5h1M831 226.5h2M833 225.5h2M835 224.5h2M837 223.5h1M838 222.5h2M840 221.5h2M842 220.5h1M842 220.5h7M849 219.5h5M853 219.5h3M856 218.5h7M863 217.5h3M865 217.5h2M867 216.5h3M870 215.5h3M873 214.5h3M876 213.5h1M876 213.5h1M877 214.5h3M880 215.5h2M882 216.5h3M885 217.5h3M888 218.5h1M888 218.5h13M900 218.5h2M902 217.5h2M904 216.5h2M906 215.5h2M908 214.5h2M910 213.5h2M911 213.5h1M912 212.5h1M913 211.5h1M914 210.5h1M915 209.5h1M916 208.5h1M917 207.5h1M918 206.5h1M919 205.5h1M920 204.5h1M921 203.5h1M922 202.5h2M935.5 179v1M934.5 180v2M933.5 182v2M932.5 184v2M931.5 186v2M930.5 188v2M929.5 190v1M928.5 191v2M927.5 193v2M926.5 195v2M925.5 197v2M924.5 199v2M923.5 201v2M946.5 151v2M945.5 153v2M944.5 155v3M943.5 158v2M942.5 160v3M941.5 163v2M940.5 165v3M939.5 168v2M938.5 170v3M937.5 173v2M936.5 175v3M935.5 178v2M958.5 127v2M957.5 129v2M956.5 131v2M955.5 133v2M954.5 135v2M953.5 137v2M952.5 139v2M951.5 141v2M950.5 143v2M949.5 145v2M948.5 147v2M947.5 149v2M946.5 151v1M958 127.5h2M960 126.5h3M963 125.5h2M965 124.5h2M967 123.5h3M970 122.5h1M970 122.5h1M971 121.5h1M972 120.5h2M974 119.5h1M975 118.5h1M976 117.5h1M977 116.5h1M978 115.5h1M979 114.5h1M980 113.5h1M981 112.5h1M981 112.5h1M982 113.5h1M983 114.5h2M985 115.5h2M987 116.5h1M988 117.5h2M990 118.5h1M991 119.5h2M993 120.5h1M993 120.5h4M997 121.5h4M1001 122.5h4M1004.5 122v1M1005.5 123v2M1006.5 125v1M1007.5 126v1M1008.5 127v1M1009.5 128v2M1010.5 130v1M1011.5 131v1M1012.5 132v2M1013.5 134v1M1014.5 135v1M1015.5 136v1M1016.5 137v2M1016 138.5h1M1017 137.5h1M1018 136.5h2M1020 135.5h1M1021 134.5h2M1023 133.5h1M1024 132.5h2M1026 131.5h1M1027 130.5h2M1028 130.5h6M1034 131.5h5"/>
<path fill="none" stroke="#ffffff" stroke-width="1" d="M4 484.5h3M7 483.5h16M22 483.5h3M25 482.5h7M32 481.5h6M37 481.5h1M38 480.5h3M41 479.5h2M43 478.5h3M46 477.5h3M49 476.5h3M52 475.5h3M55 474.5h2M57 473.5h3M60 472.5h3M62 472.5h1M63 471.5h5M68 470.5h4M72 469.5h5M77 468.5h4M81 467.5h5M85 467.5h13M97 467.5h3M100 468.5h3M103 469.5h2M105 470.5h3M108 471.5h2M109 471.5h1M110 472.5h2M112 473.5h2M114 474.5h2M116 475.5h1M117 476.5h2M119 477.5h2M121 478.5h2M123 479.5h2M125 480.5h1M125 480.5h1M126 481.5h2M128 482.5h2M130 483.5h2M132 484.5h2M134 485.5h2M136 486.5h2M138 487.5h2M140 488.5h2M142 489.5h2M144 490.5h2M146 491.5h2M148 492.5h3M150 492.5h1M151 493.5h2M153 494.5h3M156 495.5h2M158 496.5h3M161 497.5h2M163 498.5h3M166 499.5h2M167 499.5h2M169 500.5h2M171 501.5h3M174 502.5h2M176 503.5h3M179 504.5h1M179 504.5h5M184 505.5h5M189 506.5h2M190 506.5h13M202 506.5h2M204 505.5h5M209 504.5h4M212 504.5h1M213 503.5h3M216 502.5h2M218 501.5h2M220 500.5h2M222 499.5h3M225 498.5h2M227 497.5h2M229 496.5h3M232 495.5h2M233 495.5h1M234 494.5h1M235 493.5h2M237 492.5h1M238 491.5h2M240 490.5h1M241 489.5h2M243 488.5h1M244 487.5h2M246 486.5h2M248 485.5h1M249 484.5h2M250 484.5h1M251 483.5h2M253 482.5h1M254 481.5h2M256 480.5h2M258 479.5h2M260 478.5h2M262 477.5h2M264 476.5h1M264 476.5h2M266 475.5h2M268 474.5h2M270 473.5h2M272 472.5h3M275 471.5h2M277 470.5h2M279 469.5h1M279 469.5h3M282 468.5h2M284 467.5h3M287 466.5h3M290 465.5h3M293 464.5h3M296 463.5h1M296 463.5h4M300 462.5h4M304 461.5h5M309 460.5h5M314 459.5h1M314 459.5h5M319 458.5h6M325 457.5h6M330 457.5h3M333 456.5h9M341 456.5h3M344 457.5h6M350 458.5h5M354 458.5h1M355 459.5h4M359 460.5h3M362 461.5h3M365 462.5h4M369 463.5h1M369 463.5h4M373 464.5h4M377 465.5h4M381 466.5h1M381 466.5h14M394 466.5h2M396 467.5h7M403 468.5h7M410 469.5h2M411 469.5h3M414 470.5h2M416 471.5h2M418 472.5h2M420 473.5h2M422 474.5h3M424 475.5h2M426 476.5h2M428 477.5h2M430 478.5h2M432 479.5h2M434 480.5h2M436 481.5h1M436 481.5h2M438 482.5h3M441 483.5h4M445 484.5h4M448 484.5h9M457 483.5h3M459 483.5h3M462 482.5h4M466 481.5h4M470 480.5h2M471 480.5h2M473 479.5h3M476 478.5h2M478 477.5h2M480 476.5h3M483 475.5h2M485 474.5h3M488 473.5h2M489 473.5h1M490 472.5h3M493 471.5h3M496 470.5h3M499 469.5h2M501 468.5h3M504 467.5h1M504 467.5h4M508 466.5h3M511 465.5h4M515 464.5h3M518 463.5h2M519 463.5h4M523 462.5h4M527 461.5h2M528 461.5h4M532 460.5h5M537 459.5h2M538 459.5h14M551 459.5h1M552 460.5h2M554 461.5h2M556 462.5h1M557 463.5h2M559 464.5h2M561 465.5h2M563 466.5h1M563 466.5h1M564 467.5h2M566 468.5h1M567 469.5h2M569 470.5h1M570 471.5h1M571 472.5h2M573 473.5h1M574 474.5h2M575 474.5h1M576 475.5h2M578 476.5h2M580 477.5h2M582 478.5h3M585 479.5h2M586 479.5h1M587 480.5h6M593 481.5h4M596 481.5h2M598 482.5h4M602 483.5h4M606 484.5h3M608 484.5h18M625 484.5h6M631 483.5h3M633 483.5h3M636 484.5h9M644 484.5h1M645 485.5h2M647 486.5h3M650 487.5h3M653 488.5h2M655 489.5h1M655 489.5h3M658 490.5h3M661 491.5h3M664 492.5h4M667 493.5h9M676 494.5h3M678 494.5h1M679 493.5h3M682 492.5h4M686 491.5h3M688 491.5h1M689 490.5h4M693 489.5h4M697 488.5h4M701 487.5h3M703 487.5h2M705 486.5h3M708 485.5h3M711 484.5h3M714 483.5h3M717 482.5h2M718 482.5h2M720 481.5h4M724 480.5h3M727 479.5h4M731 478.5h3M734 477.5h2M735 477.5h2M737 476.5h3M740 475.5h2M742 474.5h2M744 473.5h3M747 472.5h2M748 472.5h2M750 471.5h3M753 470.5h4M757 469.5h4M761 468.5h3M763 468.5h1M764 467.5h3M767 466.5h3M770 465.5h2M772 464.5h3M775 463.5h2M776 463.5h3M779 462.5h3M782 461.5h2M783 461.5h1M784 462.5h4M788 463.5h3M790 463.5h1M791 464.5h3M794 465.5h3M797 466.5h3M800 467.5h4M804 468.5h3M807 469.5h1M807 469.5h2M809 470.5h2M811 471.5h2M813 472.5h2M815 473.5h2M817 474.5h2M819 475.5h2M821 476.5h2M823 477.5h2M825 478.5h2M827 479.5h2M829 480.5h2M831 481.5h1M831 481.5h3M834 482.5h3M837 483.5h3M840 484.5h3M842 484.5h1M843 485.5h2M845 486.5h2M847 487.5h2M849 488.5h2M851 489.5h2M852 489.5h1M853 490.5h5M858 491.5h5M863 492.5h3M865 492.5h3M868 493.5h5M873 494.5h5M877 494.5h6M883 493.5h3M885 493.5h3M888 492.5h3M891 491.5h3M894 490.5h4M898 489.5h3M900 489.5h13M912 489.5h3M915 490.5h4M919 491.5h3M922 492.5h4M925 493.5h4M929 494.5h3M932 495.5h3M935 496.5h3M937 496.5h2M939 497.5h5M944 498.5h5M949 499.5h2M950 499.5h6M956 500.5h4M959 500.5h3M962 499.5h4M966 498.5h2M967 498.5h6M973 497.5h8M981 496.5h2M982 496.5h5M987 495.5h6M993 494.5h5M998 493.5h5M1002 493.5h2M1004 492.5h3M1007 491.5h3M1010 490.5h3M1013 489.5h3M1016 488.5h3M1019 487.5h2M1020 487.5h2M1022 486.5h3M1025 485.5h3M1028 484.5h3M1030 484.5h1M1031 483.5h4M1035 482.5h3"/>
<path fill="none" stroke="#ffff00" stroke-width="1" d="M4 426.5h19M22 426.5h1M23 427.5h7M30 428.5h6M36 429.5h2M37 429.5h3M40 430.5h3M43 431.5h2M45 432.5h3M48 433.5h3M51 434.5h3M54 435.5h2M56 436.5h3M59 437.5h3M62 438.5h1M62 438.5h4M66 439.5h5M71 440.5h4M75 441.5h5M80 442.5h4M84 443.5h2M85 443.5h13M97 443.5h1M98 442.5h3M101 441.5h2M103 440.5h3M106 439.5h3M109 438.5h1M109 438.5h2M111 437.5h2M113 436.5h1M114 435.5h2M116 434.5h2M118 433.5h2M120 432.5h2M122 431.5h1M123 430.5h2M125 429.5h1M125 429.5h2M127 428.5h2M129 427.5h2M131 426.5h2M133 425.5h2M135 424.5h2M137 423.5h2M139 422.5h2M141 421.5h2M143 420.5h2M145 419.5h2M147 418.5h2M149 417.5h2M150 417.5h1M151 416.5h3M154 415.5h2M156 414.5h3M159 413.5h3M162 412.5h2M164 411.5h3M167 410.5h1M167 410.5h2M169 409.5h3M172 408.5h2M174 407.5h3M177 406.5h3M179 406.5h1M180 405.5h5M185 404.5h6M190 404.5h13M202 404.5h5M207 405.5h5M212 406.5h1M212 406.5h3M215 407.5h2M217 408.5h3M220 409.5h2M222 410.5h2M224 411.5h2M226 412.5h3M229 413.5h2M231 414.5h3M233 415.5h2M235 416.5h1M236 417.5h2M238 418.5h1M239 419.5h2M241 420.5h1M242 421.5h2M244 422.5h2M246 423.5h1M247 424.5h2M249 425.5h1M250 426.5h1M250 426.5h2M252 427.5h2M254 428.5h2M256 429.5h2M258 430.5h2M260 431.5h2M262 432.5h1M263 433.5h2M264 433.5h1M265 434.5h3M268 435.5h2M270 436.5h2M272 437.5h2M274 438.5h2M276 439.5h2M278 440.5h2M279 440.5h2M281 441.5h3M284 442.5h2M286 443.5h3M289 444.5h3M292 445.5h3M295 446.5h2M296 446.5h2M298 447.5h5M303 448.5h5M308 449.5h4M312 450.5h3M314 450.5h4M318 451.5h5M323 452.5h6M329 453.5h2M330 453.5h12M341 453.5h5M346 452.5h6M352 451.5h3M354 451.5h2M356 450.5h4M360 449.5h3M363 448.5h3M366 447.5h4M369 447.5h1M370 446.5h4M374 445.5h4M378 444.5h4M381 444.5h3M384 443.5h11M394 443.5h5M399 442.5h7M406 441.5h6M411 441.5h1M412 440.5h2M414 439.5h2M416 438.5h3M419 437.5h2M421 436.5h2M423 435.5h2M424 435.5h1M425 434.5h2M427 433.5h2M429 432.5h2M431 431.5h1M432 430.5h2M434 429.5h2M436 428.5h1M436 428.5h3M439 427.5h3M442 426.5h4M446 425.5h3M448 425.5h6M454 426.5h6M459 426.5h2M461 427.5h4M465 428.5h4M469 429.5h3M471 429.5h1M472 430.5h3M475 431.5h2M477 432.5h3M480 433.5h2M482 434.5h2M484 435.5h3M487 436.5h2M489 437.5h1M489 437.5h3M492 438.5h3M495 439.5h3M498 440.5h3M501 441.5h2M503 442.5h2M504 442.5h3M507 443.5h3M510 444.5h4M514 445.5h3M517 446.5h3M519 446.5h2M521 447.5h5M526 448.5h3M528 448.5h3M531 449.5h5M536 450.5h3M538 450.5h14M551 450.5h2M553 449.5h1M554 448.5h2M556 447.5h2M558 446.5h2M560 445.5h1M561 444.5h3M563 443.5h2M565 442.5h1M566 441.5h2M568 440.5h1M569 439.5h1M570 438.5h2M572 437.5h1M573 436.5h2M575 435.5h1M575 435.5h1M576 434.5h3M579 433.5h2M581 432.5h2M583 431.5h2M585 430.5h2M586 430.5h3M589 429.5h6M595 428.5h2M596 428.5h3M599 427.5h4M603 426.5h4M607 425.5h2M608 425.5h18M625 425.5h5M630 426.5h4M633 426.5h5M638 425.5h7M644 425.5h1M645 424.5h3M648 423.5h3M651 422.5h2M653 421.5h3M655 421.5h1M656 420.5h3M659 419.5h3M662 418.5h3M665 417.5h3M667 417.5h3M670 416.5h9M678 416.5h3M681 417.5h4M685 418.5h3M688 419.5h1M688 419.5h4M692 420.5h4M696 421.5h4M700 422.5h4M703 422.5h1M704 423.5h3M707 424.5h3M710 425.5h3M713 426.5h3M716 427.5h3M718 427.5h1M719 428.5h4M723 429.5h3M726 430.5h4M730 431.5h3M733 432.5h3M735 432.5h1M736 433.5h3M739 434.5h2M741 435.5h3M744 436.5h2M746 437.5h3M748 437.5h1M749 438.5h3M752 439.5h4M756 440.5h4M760 441.5h3M763 442.5h1M763 442.5h3M766 443.5h3M769 444.5h3M772 445.5h2M774 446.5h3M776 446.5h1M777 447.5h4M781 448.5h3M783 448.5h2M785 447.5h3M788 446.5h3M790 446.5h2M792 445.5h3M795 444.5h3M798 443.5h3M801 442.5h4M805 441.5h3M807 441.5h1M808 440.5h2M810 439.5h2M812 438.5h2M814 437.5h2M816 436.5h2M818 435.5h2M820 434.5h2M822 433.5h2M824 432.5h2M826 431.5h2M828 430.5h2M830 429.5h2M831 429.5h1M832 428.5h3M835 427.5h3M838 426.5h3M841 425.5h2M842 425.5h1M843 424.5h2M845 423.5h2M847 422.5h2M849 421.5h2M851 420.5h2M852 420.5h2M854 419.5h5M859 418.5h5M864 417.5h2M865 417.5h4M869 416.5h5M874 415.5h4M877 415.5h5M882 416.5h4M885 416.5h2M887 417.5h3M890 418.5h3M893 419.5h4M897 420.5h3M900 421.5h1M900 421.5h13M912 421.5h1M913 420.5h3M916 419.5h4M920 418.5h3M923 417.5h3M925 417.5h1M926 416.5h4M930 415.5h3M933 414.5h3M936 413.5h2M937 413.5h4M941 412.5h5M946 411.5h5M950 411.5h1M951 410.5h7M958 409.5h2M959 409.5h1M960 410.5h5M965 411.5h3M967 411.5h4M971 412.5h7M978 413.5h5M982 413.5h3M985 414.5h6M991 415.5h6M997 416.5h5M1002 417.5h1M1002 417.5h4M1006 418.5h3M1009 419.5h3M1012 420.5h3M1015 421.5h3M1018 422.5h3M1020 422.5h1M1021 423.5h3M1024 424.5h3M1027 425.5h3M1030 426.5h1M1030 426.5h4M1034 427.5h4"/>
<path fill="none" stroke="#ff00ff" stroke-width="1" d="M4 460.5h1035"/>
<path fill="none" stroke="#ff0000" stroke-width="1" d="M341.5 362v5M340.5 367v10M339.5 377v10M338.5 387v10M337.5 397v10M336.5 407v10M335.5 417v10M334.5 427v10M333.5 437v10M332.5 447v10M331.5 457v10M330.5 467v5M341.5 362v5M342.5 367v9M343.5 376v9M344.5 385v9M345.5 394v9M346.5 403v9M347.5 412v9M348.5 421v9M349.5 430v10M350.5 440v9M351.5 449v9M352.5 458v9M353.5 467v5"/>
<path fill="none" stroke="#ffc800" stroke-width="1" d="M4 471.5h1035"/>
<path fill="none" stroke="#00e600" stroke-width="1" d="M4 471.5h465"/>
<path fill="none" stroke="#00e600" stroke-width="1" d="M481.5 382v4M480.5 386v8M479.5 394v7M478.5 401v7M477.5 408v8M476.5 416v7M475.5 423v8M474.5 431v7M473.5 438v8M472.5 446v7M471.5 453v7M470.5 460v8M469.5 468v4M481 382.5h13M493.5 382v5M494.5 387v8M495.5 395v8M496.5 403v8M497.5 411v8M498.5 419v8M499.5 427v8M500.5 435v8M501.5 443v8M502.5 451v8M503.5 459v8M504.5 467v5M516.5 382v4M515.5 386v8M514.5 394v7M513.5 401v7M512.5 408v8M511.5 416v7M510.5 423v8M509.5 431v7M508.5 438v8M507.5 446v7M506.5 453v7M505.5 460v8M504.5 468v4M516 382.5h12M527.5 382v4M528.5 386v8M529.5 394v7M530.5 401v7M531.5 408v8M532.5 416v7M533.5 423v8M534.5 431v7M535.5 438v8M536.5 446v7M537.5 453v7M538.5 460v8M539.5 468v4"/>
<path fill="none" stroke="#00e600" stroke-width="1" d="M539 471.5h500"/>
</g>
<circle cx="96.05" cy="10.95" r="6.15" fill="#8a8a8a"/>
<polyline points="92.85,9.7 95.95,12.5 99.1,9.7" fill="none" stroke="#0c0c14" stroke-width="1.05"/>
<circle cx="7.03" cy="348.95" r="6.15" fill="#8a8a8a"/>
<polyline points="3.83,347.7 6.93,350.5 10.08,347.7" fill="none" stroke="#0c0c14" stroke-width="1.05"/>
<text x="2.3" y="14.8" fill="#c8c8c8" textLength="48" lengthAdjust="spacingAndGlyphs" >北方国际</text>
<text x="51.9" y="14.8" fill="#c8c8c8" textLength="32.1" lengthAdjust="spacingAndGlyphs" >(日线)</text>
<text x="106.7" y="14.8" fill="#ffffff" textLength="63.5" lengthAdjust="spacingAndGlyphs" >MA5: 12.45</text>
<text x="176.5" y="14.8" fill="#ffff00" textLength="70.6" lengthAdjust="spacingAndGlyphs" >MA10: 12.55</text>
<text x="253.5" y="14.8" fill="#ff00ff" textLength="71.2" lengthAdjust="spacingAndGlyphs" >MA20: 12.05</text>
<text x="330.3" y="14.8" fill="#00e600" textLength="71.4" lengthAdjust="spacingAndGlyphs" >MA60: 11.46</text>
<text x="407.7" y="14.8" fill="#c0c0c0" textLength="78.1" lengthAdjust="spacingAndGlyphs" >MA120: 11.38</text>
<text x="491.4" y="14.8" fill="#0000ff" textLength="78.1" lengthAdjust="spacingAndGlyphs" >MA250: 10.92</text>
<text x="17.1" y="352.8" fill="#c8c8c8" textLength="47.8" lengthAdjust="spacingAndGlyphs" >天地相交</text>
<text x="70.3" y="352.8" fill="#ffffff" textLength="47" lengthAdjust="spacingAndGlyphs" >地: -7.92</text>
<text x="123" y="352.8" fill="#ffff00" textLength="49.8" lengthAdjust="spacingAndGlyphs" >天: 31.92</text>
<text x="178.5" y="352.8" fill="#ff00ff" textLength="54.4" lengthAdjust="spacingAndGlyphs" >相交: 8.18</text>
<text x="238.5" y="352.8" fill="#ff0000" textLength="54.5" lengthAdjust="spacingAndGlyphs" >蛮准: 0.00</text>
<text x="298.5" y="352.8" fill="#c0c0c0" textLength="54.7" lengthAdjust="spacingAndGlyphs" >启动: 0.00</text>
<text x="358.3" y="352.8" fill="#0000ff" textLength="54.6" lengthAdjust="spacingAndGlyphs" >捕食: 0.00</text>
<text x="418.6" y="352.8" fill="#ffff00" textLength="54.4" lengthAdjust="spacingAndGlyphs" >补仓: 0.00</text>
<text x="478.4" y="352.8" fill="#00e600" textLength="54.4" lengthAdjust="spacingAndGlyphs" >短买: 0.00</text>
<text x="972.5" y="35" fill="#c8c8c8" textLength="30.3" lengthAdjust="spacingAndGlyphs" >13.66</text>
<path d="M958.5 24.5 L969.5 28.5 M961.5 22.5 L958.5 24.5 L961 27.5" fill="none" stroke="#c8c8c8" stroke-width="1"/>
<text x="553.4" y="304.7" fill="#c8c8c8" textLength="28.8" lengthAdjust="spacingAndGlyphs" >10.52</text>
<path d="M540 300.5 H551 M543 297.5 L540 300.5 L543 303.5" fill="none" stroke="#c8c8c8" stroke-width="1"/>
<rect x="741" y="326" width="13" height="13" fill="#0a3c78"/>
<text x="741.5" y="336.8" fill="#ffffff" stroke="#ffffff" stroke-width="0.35" style="font-size:12px">财</text>
<path d="M1054 5.5 L1048.5 11.5 L1054 17.5" fill="none" stroke="#808080" stroke-width="1"/>
</svg></body></html>
